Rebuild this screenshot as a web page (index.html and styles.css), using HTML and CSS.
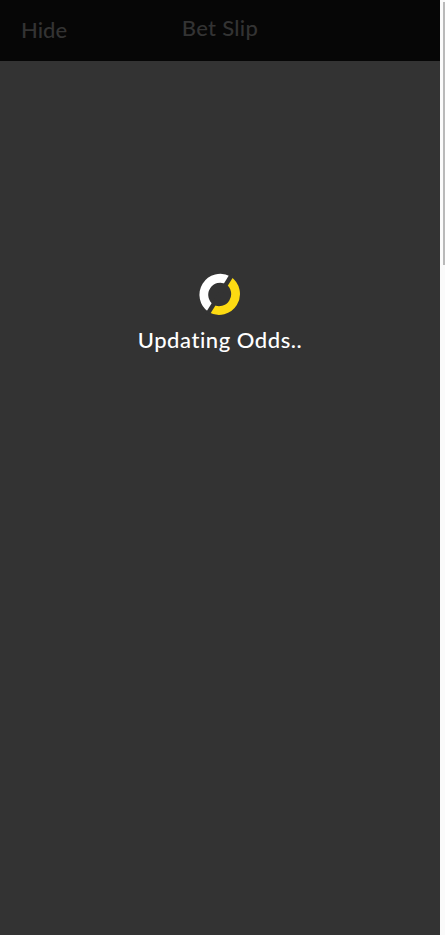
FILE: index.html
```html
<!DOCTYPE html>
<html>
	<head>
		<meta charset="UTF-8">
		<title>Bet Slip</title>
		<link rel="stylesheet" href="styles.css">
	</head>
	<body>
		<div class="page">
			<div class="betslip">
				<div class="header">
					<a class="hide">Hide</a>
					<h1 class="title">Bet Slip</h1>
				</div>
				<div class="loading">
					<svg class="spinner" viewBox="0 0 44 44">
						<path d="M30.4 8.4A16.5 16.5 0 0 0 13 36.4" stroke="#fff" />
						<path d="M30.4 8.4A16.5 16.5 0 0 1 13 36.4" stroke="#fddb12" />
						<path class="gap" d="M34.4 2L9 42.8" />
					</svg>
					<p class="loadingtxt">Updating Odds..</p>
				</div>
			</div>
			<div class="scrollbar">
				<div class="thumb"></div>
			</div>
		</div>
	</body>
</html>
```
FILE: styles.css
```css
body{
	margin:0;
	background-color:#fafafa;
	font-family:Lato,"Liberation Sans",sans-serif;
}
.page{
	display:flex;
	height:935px;
	overflow:hidden;
}
.betslip{
	width:440px;
	background-color:#333;
}
.header{
	display:grid;
	grid-template-columns:1fr auto 1fr;
	height:61px;
	padding:0 21px;
	box-sizing:border-box;
	background-color:#060606;
	color:#333;
}
.hide,.title,.loadingtxt{
	margin:0;
	font-size:22px;
	font-weight:500;
	line-height:26px;
	font-variant-ligatures:none;
}
.hide{
	padding-top:17px;
}
.title{
	padding-top:15px;
	letter-spacing:.3px;
}
.loading{
	display:flex;
	flex-direction:column;
	align-items:center;
	padding-top:211px;
}
.spinner{
	width:44px;
	height:44px;
	fill:none;
	stroke-width:8.8;
}
.spinner .gap{
	stroke:#333;
	stroke-width:4.4;
}
.loadingtxt{
	margin-top:11px;
	letter-spacing:.55px;
	color:#fff;
}
.scrollbar{
	flex:1;
	padding:2px 0 0 3px;
}
.thumb{
	height:263px;
	background-color:#b9b9b9;
}
```
